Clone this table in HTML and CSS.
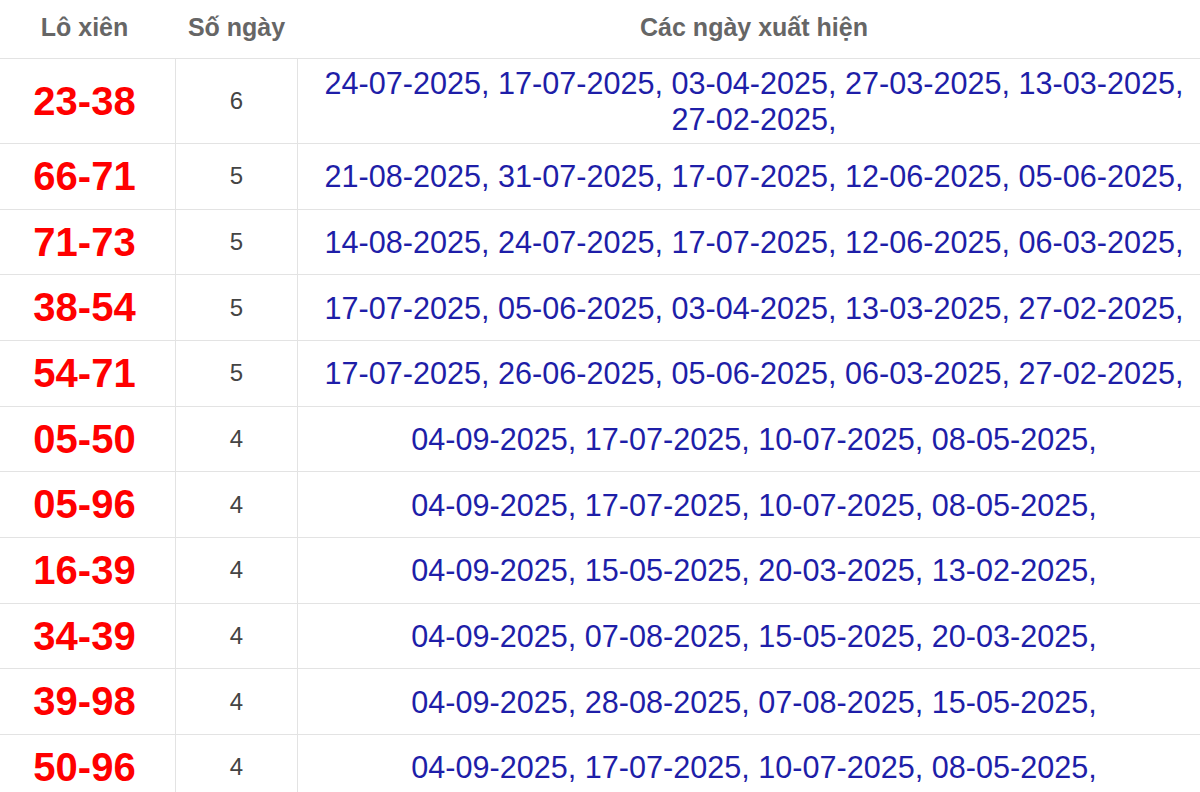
FILE: index.html
```html
<!DOCTYPE html>
<html lang="vi">
<head>
    <meta charset="UTF-8">
    <meta name="viewport" content="width=device-width, initial-scale=1.0">
    <title>Lô xiên về nhiều nhất</title>
    <link rel="stylesheet" href="styles.css">
</head>
<body>

    <!-- Bảng thống kê lô xiên -->
    <table class="stats-table">
        <colgroup>
            <col class="col-pair">
            <col class="col-count">
            <col class="col-dates">
        </colgroup>
        <thead>
            <tr>
                <th>Lô xiên</th>
                <th>Số ngày</th>
                <th>Các ngày xuất hiện</th>
            </tr>
        </thead>
        <tbody>
            <tr>
                <td class="pair">23-38</td>
                <td class="count">6</td>
                <td class="dates">24-07-2025, 17-07-2025, 03-04-2025, 27-03-2025, 13-03-2025, 27-02-2025,</td>
            </tr>
            <tr>
                <td class="pair">66-71</td>
                <td class="count">5</td>
                <td class="dates">21-08-2025, 31-07-2025, 17-07-2025, 12-06-2025, 05-06-2025,</td>
            </tr>
            <tr>
                <td class="pair">71-73</td>
                <td class="count">5</td>
                <td class="dates">14-08-2025, 24-07-2025, 17-07-2025, 12-06-2025, 06-03-2025,</td>
            </tr>
            <tr>
                <td class="pair">38-54</td>
                <td class="count">5</td>
                <td class="dates">17-07-2025, 05-06-2025, 03-04-2025, 13-03-2025, 27-02-2025,</td>
            </tr>
            <tr>
                <td class="pair">54-71</td>
                <td class="count">5</td>
                <td class="dates">17-07-2025, 26-06-2025, 05-06-2025, 06-03-2025, 27-02-2025,</td>
            </tr>
            <tr>
                <td class="pair">05-50</td>
                <td class="count">4</td>
                <td class="dates">04-09-2025, 17-07-2025, 10-07-2025, 08-05-2025,</td>
            </tr>
            <tr>
                <td class="pair">05-96</td>
                <td class="count">4</td>
                <td class="dates">04-09-2025, 17-07-2025, 10-07-2025, 08-05-2025,</td>
            </tr>
            <tr>
                <td class="pair">16-39</td>
                <td class="count">4</td>
                <td class="dates">04-09-2025, 15-05-2025, 20-03-2025, 13-02-2025,</td>
            </tr>
            <tr>
                <td class="pair">34-39</td>
                <td class="count">4</td>
                <td class="dates">04-09-2025, 07-08-2025, 15-05-2025, 20-03-2025,</td>
            </tr>
            <tr>
                <td class="pair">39-98</td>
                <td class="count">4</td>
                <td class="dates">04-09-2025, 28-08-2025, 07-08-2025, 15-05-2025,</td>
            </tr>
            <tr>
                <td class="pair">50-96</td>
                <td class="count">4</td>
                <td class="dates">04-09-2025, 17-07-2025, 10-07-2025, 08-05-2025,</td>
            </tr>
        </tbody>
    </table>

</body>
</html>
```

FILE: styles.css
```css
* {
    margin: 0;
    padding: 0;
    box-sizing: border-box;
}

body {
    font-family: 'Liberation Sans', Arial, sans-serif;
    background-color: #ffffff;
    overflow: hidden;
}

/* the table is a bit wider than the window, edges are cut off */
.stats-table {
    width: 1218px;
    margin-left: -7px;
    border-collapse: collapse;
    table-layout: fixed;
    text-align: center;
}

.col-pair {
    width: 182px;
}

.col-count {
    width: 122px;
}

.stats-table th {
    font-size: 25px;
    font-weight: bold;
    line-height: 28px;
    color: #666666;
    padding: 13px 0 17px;
    border-bottom: 1px solid #e3e3e3;
}

.stats-table td {
    padding: 6px 0;
    border: 1px solid #e3e3e3;
    vertical-align: middle;
}

.pair {
    font-size: 40px;
    font-weight: bold;
    line-height: 52.67px;
    color: #ff0000;
}

.count {
    font-size: 24px;
    color: #444444;
}

.stats-table td.dates {
    padding: 6px 20px;
    font-size: 30.6px;
    line-height: 36px;
    color: #1e1ea8;
}
```
